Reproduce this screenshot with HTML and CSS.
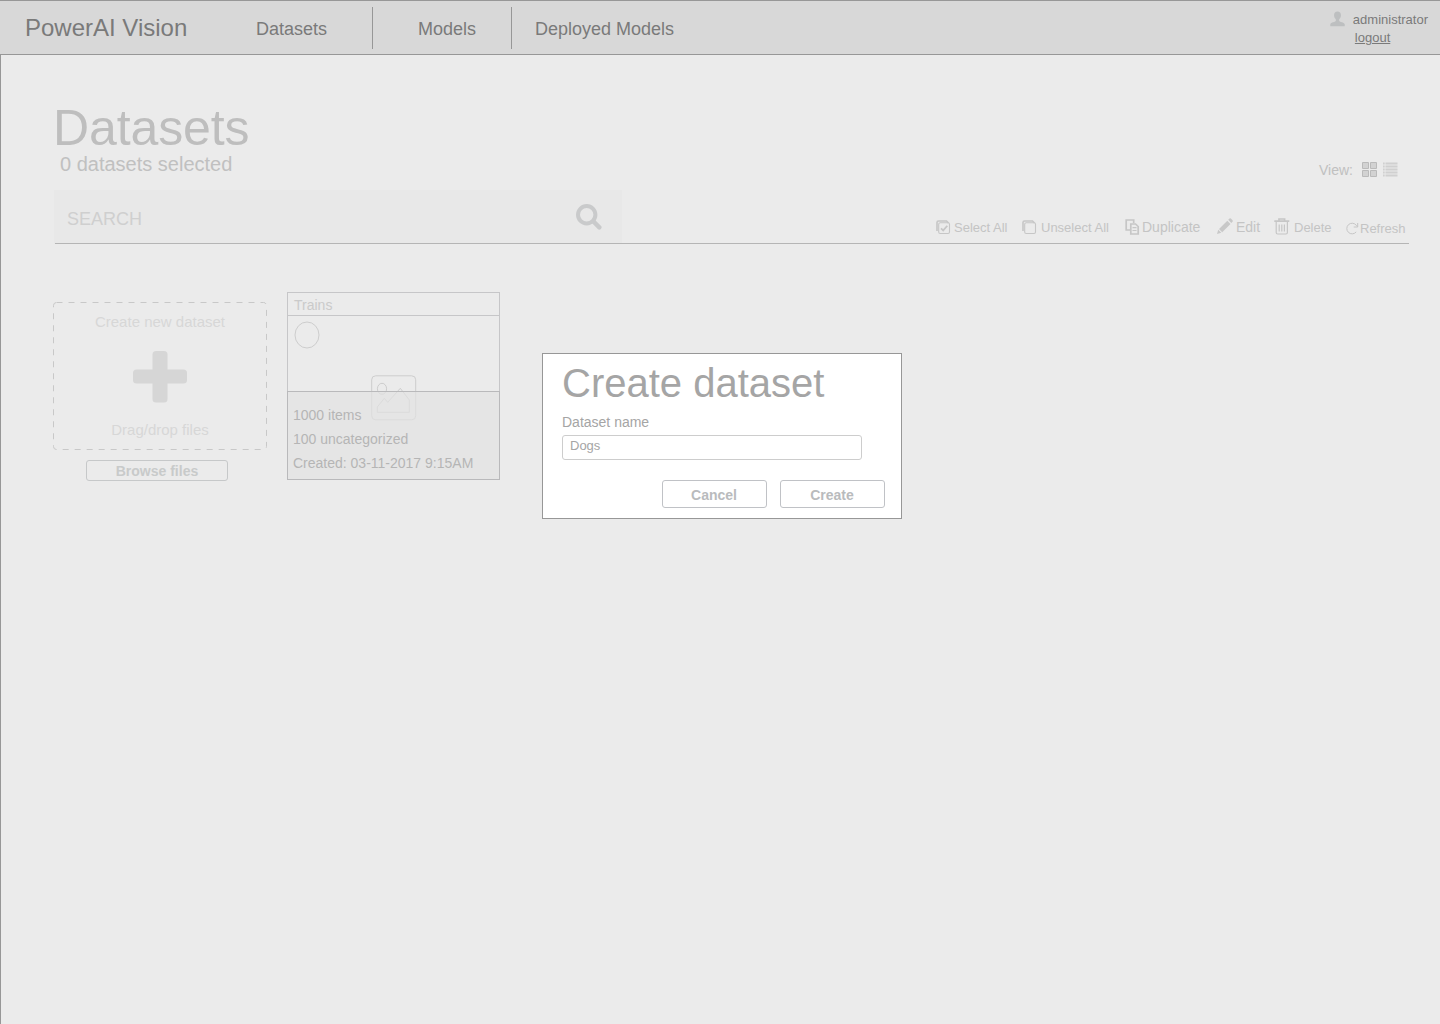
FILE: index.html
```html
<!DOCTYPE html>
<html lang="en">
<head>
<meta charset="utf-8">
<title>PowerAI Vision - Datasets</title>
<link rel="stylesheet" href="styles.css">
</head>
<body>
<header class="topbar">
  <div class="brand">PowerAI Vision</div>
  <nav class="nav">
    <a class="nav-item nav-datasets">Datasets</a>
    <a class="nav-item nav-models">Models</a>
    <a class="nav-item nav-deployed">Deployed Models</a>
  </nav>
  <div class="user">
    <svg class="user-icon" width="15" height="16" viewBox="0 0 16 16"><path d="M8 0C5.600 0 4.300 1.700 4.300 4C4.300 6 5.300 7.500 6.200 8.300V10.200C5.500 11.300 1 11.300 .3 13.500V15.800H15.700V13.500C15 11.300 10.500 11.300 9.800 10.200V8.300C10.700 7.500 11.700 6 11.700 4C11.700 1.700 10.400 0 8 0Z"/></svg>
    <div class="user-text"><span>administrator</span><a class="logout">logout</a></div>
  </div>
</header>
<main class="page">
  <h1 class="title">Datasets</h1>
  <div class="subhead">
    <p class="selected">0 datasets selected</p>
    <div class="view">
      <span>View:</span>
      <svg class="view-grid" width="16" height="16" viewBox="0 0 16 16"><path d="M.5 1.500H6.500V7.500H.5ZM8.500 1.500H14.500V7.500H8.500ZM.5 9.500H6.500V15.500H.5ZM8.500 9.500H14.500V15.500H8.500Z"/></svg>
      <svg class="view-list" width="15" height="15" viewBox="0 0 15 15"><path d="M0 1.500H1.700M2.500 1.500H14.500M0 4.500H1.700M2.500 4.500H14.500M0 7.500H1.700M2.500 7.500H14.500M0 10.500H1.700M2.500 10.500H14.500M0 13.500H1.700M2.500 13.500H14.500"/></svg>
    </div>
  </div>
  <div class="toolbar">
    <div class="search">
      <span>SEARCH</span>
      <svg width="26" height="26" viewBox="0 0 26 26"><circle cx="10.700" cy="10.700" r="8.700" fill="none" stroke-width="4"/><path d="M17.500 17.500L23.300 23.300" stroke-width="4.500" stroke-linecap="round"/></svg>
    </div>
    <div class="actions">
      <a class="action select-all"><svg width="15" height="15" viewBox="0 0 15 15"><path d="M1 11V2.500Q1 1 2.500 1H10.500L12.500 3" fill="none" stroke-width="1.600"/><rect x="2.700" y="2.700" width="10.800" height="10.800" rx="1.500" fill="none" stroke-width="1.100"/><path d="M5 8.300L7.200 10.400L11.300 5.700" fill="none" stroke-width="1.700"/></svg>Select All</a>
      <a class="action unselect-all"><svg width="15" height="15" viewBox="0 0 15 15"><path d="M1 11V2.500Q1 1 2.500 1H10.500L12.500 3" fill="none" stroke-width="1.600"/><rect x="2.700" y="2.700" width="10.800" height="10.800" rx="1.500" fill="none" stroke-width="1.100"/></svg>Unselect All</a>
      <a class="action duplicate"><svg width="15" height="16" viewBox="0 0 15 16"><path d="M5 11H1.200V1H8.700V4" fill="none" stroke-width="1.700"/><path d="M5.800 5H10.500L13.200 7.500V15H5.800Z" fill="none" stroke-width="1.700"/><path d="M7.500 8.700H11.500M7.500 11.500H11.500" stroke-width="1.200"/></svg>Duplicate</a>
      <a class="action edit"><svg width="16" height="16" viewBox="0 0 16 16"><path d="M0 16L1.200 11.700L4.300 14.800ZM2 11L10.300 2.700L13.500 5.900L5.200 14.200ZM11.200 1.800L12.500 .5Q13.200 0 13.900 .6L15.500 2.200Q16.100 2.900 15.500 3.700L14.300 4.900Z" stroke="none"/></svg>Edit</a>
      <a class="action delete"><svg width="16" height="17" viewBox="0 0 16 17"><path d="M.3 3.200H15.300M5 2.700V1H10.600V2.700" fill="none" stroke-width="1.700"/><path d="M2.200 4V14.500Q2.200 16 3.700 16H11.900Q13.400 16 13.400 14.500V4M5.200 6.500V13.500M7.800 6.500V13.500M10.400 6.500V13.500" fill="none" stroke-width="1.200"/></svg>Delete</a>
      <a class="action refresh"><svg width="13" height="13" viewBox="0 0 13 13"><path d="M10.200 9.900A5.300 5.300 0 1 1 10.300 3.300L11.300 4.600M11.700 1V5H7.700" fill="none" stroke-width="1"/></svg>Refresh</a>
    </div>
  </div>
  <div class="content">
    <section class="creator">
      <div class="dropzone">
        <svg class="dash" width="214" height="148" viewBox="0 0 214 148"><rect x=".5" y=".5" width="213" height="147" rx="3"/></svg>
        <span>Create new dataset</span>
        <svg class="plus" width="54" height="52" viewBox="0 0 54 52"><rect x="19.500" y="0" width="15" height="51.500" rx="3.500"/><rect x="0" y="18.500" width="54" height="14" rx="3.500"/></svg>
        <span>Drag/drop files</span>
      </div>
      <button class="btn browse">Browse files</button>
    </section>
    <article class="card">
      <h2 class="card-title">Trains</h2>
      <div class="card-preview">
        <svg class="card-check" width="26" height="28" viewBox="0 0 26 28"><ellipse cx="13" cy="14" rx="12" ry="13"/></svg>
        <svg class="card-image" width="46" height="46" viewBox="0 0 46 46"><rect x=".7" y=".8" width="44" height="44" rx="4"/><ellipse cx="11" cy="13.800" rx="4.600" ry="5.500"/><path d="M6.300 37.300V32L13.300 23.300L16.700 27.300L29.300 13.300L38.300 25V37.300Z"/></svg>
      </div>
      <div class="card-info"><span>1000 items</span><span>100 uncategorized</span><span>Created: 03-11-2017 9:15AM</span></div>
    </article>
  </div>
</main>
<section class="dialog">
  <h2 class="dialog-title">Create dataset</h2>
  <label class="dialog-label" for="name">Dataset name</label>
  <input class="dialog-input" id="name" type="text" value="Dogs">
  <div class="dialog-buttons"><button class="btn">Cancel</button><button class="btn">Create</button></div>
</section>
</body>
</html>
```
FILE: styles.css
```css
* { box-sizing: border-box; }
body {
  margin: 0; width: 1440px; height: 1024px; overflow: hidden;
  display: flex; flex-direction: column;
  background: #ebebeb;
  font-family: "Liberation Sans", Arial, sans-serif;
}
h1, h2, p { margin: 0; font-weight: normal; }
svg { flex: none; display: block; }

.topbar {
  display: flex; flex: none; height: 55px; padding-left: 25px;
  background: #d8d8d8; color: #7a7a7a;
  border-top: 1px solid #979797; border-bottom: 1px solid #979797;
}
.brand { width: 208px; padding-top: 13px; font-size: 24px; line-height: 27px; }
.nav { display: flex; height: 42px; margin-top: 6px; }
.nav-item { padding-top: 12px; font-size: 18px; line-height: 20px; white-space: nowrap; }
.nav-datasets { width: 140px; padding-left: 23px; border-right: 1px solid #979797; }
.nav-models { width: 139px; padding-left: 45px; border-right: 1px solid #979797; }
.nav-deployed { padding-left: 23px; }
.user { display: flex; gap: 8px; margin-left: auto; padding: 11px 12px 0 0; }
.user-icon { fill: #bdbfc0; margin-top: -1px; }
.user-text { display: flex; flex-direction: column; gap: 3px; font-size: 13px; line-height: 15px; }
.logout { padding-left: 2px; text-decoration: underline; }

.page { flex: 1; padding: 48px 31px 0 53px; border-left: 1px solid #979797; }
.title { margin-left: -1px; font-size: 50px; line-height: 50px; letter-spacing: -0.1px; color: #bebebe; }
.subhead { display: flex; justify-content: space-between; height: 37px; color: #c0c0c0; }
.selected { margin: 0 0 0 6px; font-size: 20px; line-height: 22px; }
.view { display: flex; padding: 9px 11px 0 0; font-size: 14px; line-height: 16px; }
.view-grid { margin: -1px 0 0 9px; fill: #d2d2d2; stroke: #bababa; }
.view-list { margin-left: 5px; stroke: #d0d0d0; stroke-width: 2; fill: none; }

.toolbar { display: flex; position: relative; height: 54px; }
.toolbar::after { content: ""; position: absolute; left: 1px; right: 0; bottom: 0; height: 1px; background: #b5b5b5; }
.search {
  display: flex; justify-content: space-between; width: 568px; padding: 14px 20px 0 13px;
  background: #e8e8e8; color: #cfcfcf; font-size: 18px; line-height: 20px;
}
.search span { padding-top: 5px; }
.search svg { stroke: #c9cacb; }
.actions { display: flex; margin-left: auto; padding: 30px 4px 0 0; color: #c4c4c4; font-size: 13px; line-height: 15px; white-space: nowrap; }
.action { display: flex; }
.action svg { stroke: #c6c6c6; fill: #c8c8c8; }
.select-all { width: 86px; gap: 3px; }
.unselect-all { width: 103px; gap: 4px; }
.duplicate { width: 92px; gap: 2px; }
.edit { width: 57px; gap: 3px; }
.delete { width: 72px; gap: 4px; }
.refresh { width: 59px; gap: 1px; padding-top: 1px; }
.refresh svg { margin-top: 1px; }
.duplicate, .edit { margin-top: -1px; font-size: 14px; line-height: 16px; }
.edit svg { margin-top: -1px; }
.delete svg { margin-top: -2px; }

.content { display: flex; padding-top: 48px; }
.creator { display: flex; flex-direction: column; align-items: center; width: 214px; margin: 10px 20px 0 -1px; }
.dropzone {
  position: relative; display: flex; flex-direction: column; align-items: center;
  width: 214px; height: 148px; padding-top: 11px;
  font-size: 15px; line-height: 17px; color: #d7d7d7;
}
.dash { position: absolute; left: 0; top: 0; fill: none; stroke: #c8c8c8; stroke-dasharray: 6 6; }
.plus { margin: 21px 0 18px; fill: #d6d6d6; }
.btn {
  width: 105px; height: 28px; padding: 1px 1px 0 0; border: 1px solid #c0c2c6; border-radius: 3px;
  background: transparent; color: #b9bbbd; font: bold 14px/16px "Liberation Sans", Arial, sans-serif;
}
.browse { width: 142px; height: 21px; margin: 10px 6px 0 0; padding-right: 0; border-color: #c6c8c9; color: #c8caca; }

.card { display: flex; flex-direction: column; width: 213px; height: 188px; border: 1px solid #c6c6c8; }
.card-title { height: 23px; padding: 4px 0 0 6px; border-bottom: 1px solid #c6c6c8; font-size: 14px; line-height: 16px; color: #cacaca; }
.card-preview { position: relative; height: 75px; padding: 5px 6px; }
.card-preview svg { fill: none; stroke: #cdcdcd; }
.card-image { position: absolute; left: 83px; top: 59px; }
.card-info {
  position: relative; display: flex; flex-direction: column; gap: 8px; flex: 1;
  margin: 0 -1px -1px; padding: 15px 0 0 5px;
  border: 1px solid #b9b9bb; background: rgba(225, 225, 225, .68);
  font-size: 14px; line-height: 16px; color: #b5b5b5;
}

.dialog {
  position: absolute; left: 542px; top: 353px; width: 360px; height: 166px;
  display: flex; flex-direction: column; padding: 7px 16px 0 19px;
  background: #fff; border: 1px solid #979797;
}
.dialog-title { font-size: 40px; line-height: 44px; color: #a5a5a5; }
.dialog-label { margin: 9px 0 5px; font-size: 14px; line-height: 16px; color: #a5a5a5; }
.dialog-input {
  width: 300px; height: 25px; padding: 0 7px 4px; border: 1px solid #cdcdcd; border-radius: 3px;
  background: #fff; color: #a5a5a5; font: 13px/15px "Liberation Sans", Arial, sans-serif;
}
.dialog-buttons { display: flex; justify-content: flex-end; gap: 13px; margin-top: 20px; }
```
